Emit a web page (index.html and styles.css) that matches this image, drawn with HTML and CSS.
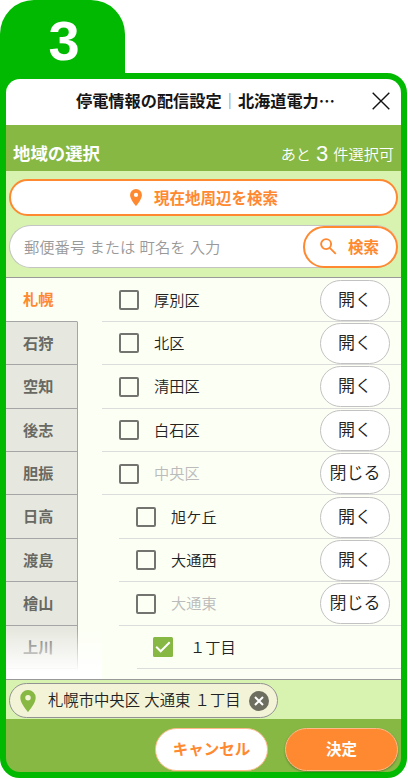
FILE: index.html
```html
<!DOCTYPE html>
<html lang="ja">
<head>
	<meta charset="utf-8">
	<title>停電情報の配信設定</title>
	<link rel="stylesheet" href="styles.css">
</head>
<body>
	<div class="step">3</div>
	<div class="phone">
		<div class="titlebar">
			<h1>停電情報の配信設定<span>｜</span>北海道電力…</h1>
			<svg class="close" width="18" height="18" viewBox="0 0 18 18"><path d="M.7.7l16.6 16.6M17.3.7L.7 17.3" fill="none" stroke="#111" stroke-width="1.4"/></svg>
		</div>
		<div class="heading">
			<h2>地域の選択</h2>
			<p>あと<em>3</em>件選択可</p>
		</div>
		<div class="search">
			<div class="around">
				<svg width="12" height="17" viewBox="0 0 14 20"><path fill="#ff8930" fill-rule="evenodd" d="M7 0a7 7 0 0 0-7 7c0 5.200 7 13 7 13s7-7.800 7-13a7 7 0 0 0-7-7zm0 9.500a2.500 2.500 0 1 1 0-5 2.500 2.500 0 0 1 0 5z"/></svg>
				<span>現在地周辺を検索</span>
			</div>
			<div class="keyword">
				<span class="hint">郵便番号 または 町名を 入力</span>
				<div class="go">
					<svg width="17" height="17" viewBox="0 0 17 17"><g fill="none" stroke="#ff8930" stroke-width="1.9"><circle cx="6.100" cy="6.100" r="5"/><path d="M9.800 9.800l6 6"/></g></svg>
					<span>検索</span>
				</div>
			</div>
		</div>
		<div class="list">
			<ul class="areas">
				<li class="on">札幌</li>
				<li>石狩</li>
				<li>空知</li>
				<li>後志</li>
				<li>胆振</li>
				<li>日高</li>
				<li>渡島</li>
				<li>檜山</li>
				<li>上川</li>
				<li></li>
			</ul>
			<ul class="towns">
				<li><i></i><span>厚別区</span><b>開く</b></li>
				<li><i></i><span>北区</span><b>開く</b></li>
				<li><i></i><span>清田区</span><b>開く</b></li>
				<li><i></i><span>白石区</span><b>開く</b></li>
				<li class="opened"><i></i><span>中央区</span><b>閉じる</b></li>
				<li class="lv2"><i></i><span>旭ケ丘</span><b>開く</b></li>
				<li class="lv2"><i></i><span>大通西</span><b>開く</b></li>
				<li class="lv2 opened"><i></i><span>大通東</span><b>閉じる</b></li>
				<li class="lv3"><svg width="20" height="20" viewBox="0 0 20 20"><rect width="20" height="20" rx="1.500" fill="#86b843"/><path d="M3.200 9.800l4.500 4.500 9-9" fill="none" stroke="#fff" stroke-width="2"/></svg><span>１丁目</span></li>
			</ul>
			<div class="fade"></div>
		</div>
		<div class="picked">
			<div class="chip">
				<svg width="16" height="22" viewBox="0 0 14 20"><path fill="#86b843" fill-rule="evenodd" d="M7 0a7 7 0 0 0-7 7c0 5.200 7 13 7 13s7-7.800 7-13a7 7 0 0 0-7-7zm0 9.500a2.500 2.500 0 1 1 0-5 2.500 2.500 0 0 1 0 5z"/></svg>
				<span>札幌市中央区 大通東 １丁目</span>
				<svg width="20" height="20" viewBox="0 0 20 20"><circle cx="10" cy="10" r="10" fill="#6e6e60"/><path d="M6 6l8 8M14 6l-8 8" stroke="#fff" stroke-width="2"/></svg>
			</div>
		</div>
		<div class="footer">
			<div class="btn cancel">キャンセル</div>
			<div class="btn ok">決定</div>
		</div>
	</div>
</body>
</html>
```
FILE: styles.css
```css
*{margin:0;padding:0;box-sizing:border-box;}
ul{list-style:none;}
i,em{font-style:normal;}
svg{display:block;flex:none;}
body{
	background:#fff;
	font-family:"Liberation Sans","Noto Sans CJK JP",sans-serif;
	font-size:15.2px;
	color:#222;
	white-space:nowrap;
	overflow:hidden;
}
.step{
	width:125px;
	height:80px;
	border-radius:34px 34px 0 0;
	padding-left:3px;
	background:#00b900;
	color:#fff;
	font:bold 56px/81px "Liberation Sans",sans-serif;
	text-align:center;
}
.phone{
	width:407px;
	height:705px;
	margin-top:-7px;
	border:6px solid #00b900;
	border-radius:0 20px 20px 20px;
	background:#00b900;
	display:flex;
	flex-direction:column;
}
.titlebar{
	height:46px;
	background:#fff;
	border-radius:14px 14px 0 0;
	display:flex;
	align-items:center;
	justify-content:space-between;
	padding:0 11px 2px 70px;
}
.titlebar h1{
	margin-top:-2px;
	font-family:"Noto Sans CJK JP",sans-serif;
	font-size:16.2px;
	color:#151515;
}
.titlebar span{
	font-weight:400;
	color:#777;
}
.heading{
	height:46px;
	background:#86b843;
	color:#fff;
	display:flex;
	justify-content:space-between;
	padding:17px 7px 0;
	line-height:24px;
}
.heading h2{
	font-size:17.4px;
}
.heading p{
	font-weight:350;
}
.heading em{
	font-size:22px;
	font-weight:400;
	margin:0 5px;
	vertical-align:-1px;
}
.search{
	height:107px;
	background:#d7f3af;
	border-bottom:1px solid #999;
	padding:8px 3px 0;
}
.around{
	height:37px;
	border:2px solid #ff8930;
	border-radius:19px;
	background:#fff;
	color:#ff8930;
	font-weight:bold;
	display:flex;
	align-items:center;
	padding-left:119px;
	gap:12px;
}
.around span{
	margin-top:-2px;
	font-size:15.500px;
}
.keyword{
	height:43px;
	margin-top:9px;
	border:1px solid #c4c4c4;
	border-right:0;
	border-radius:22px;
	background:#fff;
	display:flex;
	align-items:center;
	justify-content:space-between;
	padding-left:14px;
}
.hint{
	margin-top:-2px;
	color:#999;
	font-size:15.3px;
	font-weight:350;
}
.go{
	width:95px;
	height:42px;
	border:2px solid #ff8930;
	border-radius:21px;
	color:#ff8930;
	font-size:15.500px;
	font-weight:bold;
	display:flex;
	align-items:center;
	padding-left:15px;
	gap:11px;
}
.go span{
	margin-top:-2px;
}
.list{
	height:401px;
	padding-top:.4px;
	background:#fcfff4;
	display:flex;
	justify-content:space-between;
	position:relative;
	overflow:hidden;
}
.areas{
	width:72px;
}
.areas li{
	height:43.4px;
	line-height:43px;
	padding-left:17px;
	background:#e6e8df;
	border-right:1px solid #a5a5a5;
	border-bottom:1px solid #a5a5a5;
	color:#696963;
	font-weight:bold;
}
.areas .on{
	background:none;
	color:#ff8930;
	border-right-color:transparent;
}
.towns{
	width:299px;
}
.towns li{
	height:43.4px;
	border-bottom:1px solid #dcdcdc;
	display:flex;
	align-items:center;
	padding:1px 11px 0 17px;
	font-weight:350;
}
.towns .lv2{
	margin-left:17px;
}
.towns .lv3{
	margin-left:35px;
	padding-left:16px;
}
.towns i{
	width:20px;
	height:20px;
	border:2px solid #73736f;
	border-radius:2px;
}
.towns span{
	margin:-3px auto 0 15px;
}
.towns .lv3 span{
	margin-left:17px;
}
.towns .opened span{
	color:#bbb;
}
.towns b{
	width:70px;
	height:41px;
	border:1px solid #c2c2c2;
	border-radius:21px;
	background:#fff;
	font-size:17px;
	font-weight:350;
	line-height:40px;
	text-align:center;
}
.fade{
	position:absolute;
	left:0;
	bottom:0;
	width:96px;
	height:50px;
	background:linear-gradient(rgba(255,255,255,0),#fff 85%);
}
.picked{
	height:40px;
	background:#d7f3af;
	border-top:1px solid #999;
	padding:3px 3px 0;
}
.chip{
	width:269px;
	height:35px;
	border:1px solid #929292;
	border-radius:18px;
	background:#f3f3d7;
	display:flex;
	align-items:center;
	padding-left:10px;
	font-size:15.35px;
	font-weight:350;
}
.chip span{
	width:200px;
	margin:-3px 1px 0 12px;
}
.footer{
	height:53px;
	background:#86b843;
	border-radius:0 0 14px 14px;
	display:flex;
	justify-content:flex-end;
	gap:17px;
	padding:9px 3px 0;
}
.btn{
	width:113px;
	height:43px;
	border:1px solid #ffb98a;
	border-radius:22px;
	font-size:15.500px;
	font-weight:bold;
	line-height:41px;
	text-align:center;
}
.cancel{
	background:#fff;
	color:#ff8930;
}
.ok{
	background:#ff8930;
	color:#fff;
	box-shadow:0 1px 2px rgba(0,0,0,.3);
}
```
